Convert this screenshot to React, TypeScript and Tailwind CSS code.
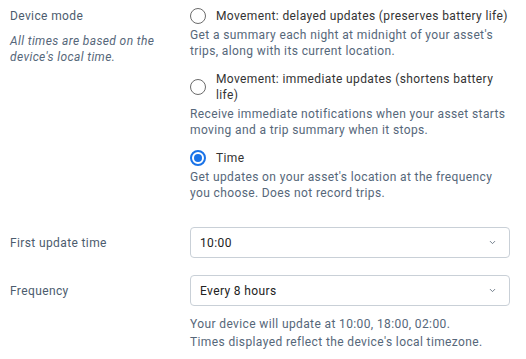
import { ChevronDown } from "lucide-react";

const options = [
  {
    id: "delayed",
    label: "Movement: delayed updates (preserves battery life)",
    desc: "Get a summary each night at midnight of your asset's trips, along with its current location.",
  },
  {
    id: "immediate",
    label: "Movement: immediate updates (shortens battery life)",
    desc: "Receive immediate notifications when your asset starts moving and a trip summary when it stops.",
  },
  {
    id: "time",
    label: "Time",
    desc: "Get updates on your asset's location at the frequency you choose. Does not record trips.",
  },
];

function Radio({ checked }: { checked: boolean }) {
  return checked ? (
    <span className="flex h-[16px] w-[16px] flex-shrink-0 items-center justify-center rounded-full border-2 border-[#1a73e8] bg-white">
      <span className="h-[8px] w-[8px] rounded-full bg-[#1a73e8]" />
    </span>
  ) : (
    <span className="h-[16px] w-[16px] flex-shrink-0 rounded-full border border-[#6b6b6b] bg-white" />
  );
}

function Select({ value }: { value: string }) {
  return (
    <div className="flex h-[31px] items-center justify-between rounded-[4px] border border-[#c9d0d7] bg-white pl-[9px] pr-[12px] text-[12px] text-[#222]">
      <span>{value}</span>
      <ChevronDown size={9} strokeWidth={2.5} className="text-[#6b7785]" />
    </div>
  );
}

export default function App() {
  const selected = "time";

  return (
    <div
      className="bg-white pl-[10px] pr-[16px] pt-[8px] text-[12px] leading-[16px] tracking-[0.38px]"
      style={{ fontFamily: "Roboto, 'Liberation Sans', sans-serif" }}
    >
      <div className="grid grid-cols-[180px_1fr] gap-y-[17px]">
        {/* device mode */}
        <div className="pr-[20px]">
          <div className="text-[#4c5c6e]">Device mode</div>
          <p className="mt-[9px] italic text-[#56677a]">
            All times are based on the device's local time.
          </p>
        </div>
        <div className="flex flex-col gap-[12px]">
          {options.map((opt) => (
            <div key={opt.id}>
              <div className="flex items-center gap-[10px] text-[#333]">
                <Radio checked={opt.id === selected} />
                <span>{opt.label}</span>
              </div>
              <p className="mt-[3px] text-[#56677a]">{opt.desc}</p>
            </div>
          ))}
        </div>

        {/* first update */}
        <div className="flex items-center pt-[9px] text-[#4c5c6e]">
          First update time
        </div>
        <div className="pt-[9px]">
          <Select value="10:00" />
        </div>

        {/* frequency */}
        <div className="flex items-center text-[#4c5c6e]">Frequency</div>
        <div>
          <Select value="Every 8 hours" />
        </div>

        <div />
        <div className="-mt-[8px] leading-[18px] text-[#56677a]">
          <p>Your device will update at 10:00, 18:00, 02:00.</p>
          <p>Times displayed reflect the device's local timezone.</p>
        </div>
      </div>
    </div>
  );
}
